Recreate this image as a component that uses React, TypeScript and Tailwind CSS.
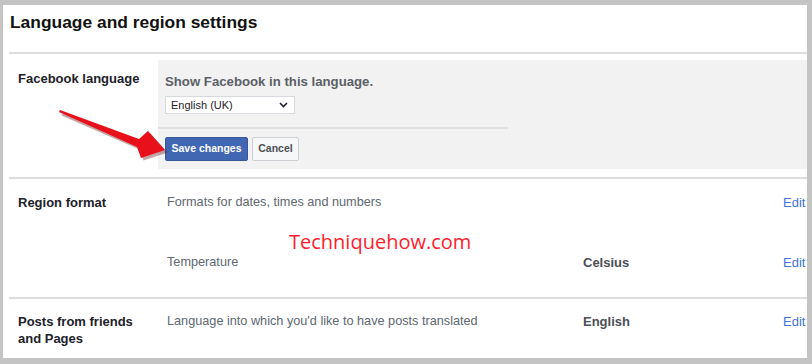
import React from "react";

const font = { fontFamily: '"Liberation Sans", Arial, sans-serif' };

function Arrow() {
  return (
    <svg
      className="absolute left-0 top-0 pointer-events-none"
      width="812"
      height="364"
      viewBox="0 0 812 364"
    >
      <polygon
        points="61,112 140,140 149,132 166,151 142,159 138,148 60,114"
        fill="#5a0000"
        opacity="0.35"
        transform="translate(1.5,1.5)"
      />
      <polygon
        points="60,110 139,139 148,131 165,150 141,158 137,147 59,112"
        fill="#e8111b"
      />
    </svg>
  );
}

function EditLink() {
  return <span className="text-[13px] leading-[17px] text-[#4473d6] whitespace-nowrap">Edit</span>;
}

function InfoLine({ text, value }: { text: string; value?: string }) {
  return (
    <div className="flex items-start leading-[17px]">
      <div className="w-[416px] shrink-0 text-[12.7px] text-[#606770]">{text}</div>
      <div className="w-[200px] shrink-0 text-[13px] font-bold text-[#4b4f56]">{value}</div>
      <EditLink />
    </div>
  );
}

export default function App() {
  return (
    <div className="relative w-[812px] h-[364px] bg-[#c4c4c4] pt-[5px] pl-[3px] pr-[5px] pb-[6px]" style={font}>
      <div className="h-full w-full bg-white overflow-hidden text-[#1d2129]">
        <h1 className="pl-[7px] pt-[6px] text-[17.4px] leading-[22px] font-bold text-[#111]">
          Language and region settings
        </h1>
        <div className="ml-[6px] mt-[19px] h-[2px] bg-[#dddddd]" />

        {/* Facebook language */}
        <div className="flex pt-[6px] pb-[8px]">
          <div className="w-[155px] shrink-0 pl-[15px] pt-[10px] text-[13px] leading-[18px] font-bold">
            Facebook language
          </div>
          <div className="flex-1 bg-[#f2f2f2] pt-[13px] pb-[8px]">
            <div className="pl-[7px] text-[13.2px] leading-[18px] font-bold text-[#5b5f66]">
              Show Facebook in this language.
            </div>
            <div className="ml-[7px] mt-[5px] flex h-[18px] w-[130px] items-center justify-between border border-[#d6d9dd] bg-white pl-[5px] pr-[6px]">
              <span className="text-[11px] leading-[16px] text-[#1d2129]">English (UK)</span>
              <svg width="9" height="6" viewBox="0 0 9 6">
                <path d="M1 1 L4.5 4.5 L8 1" fill="none" stroke="#1d2129" strokeWidth="1.6" />
              </svg>
            </div>
            <div className="mt-[13px] h-[2px] w-[350px] bg-[#e0e0e0]" />
            <div className="mt-[8px] flex gap-[4px] pl-[7px]">
              <button className="h-[24px] w-[83px] rounded-[2px] border border-[#365899] bg-[#4267b2] text-[10.5px] font-bold text-white">
                Save changes
              </button>
              <button className="h-[24px] w-[47px] rounded-[2px] border border-[#ccd0d5] bg-[#f6f7f9] text-[10.5px] font-bold text-[#4b4f56]">
                Cancel
              </button>
            </div>
          </div>
        </div>
        <div className="ml-[6px] h-[2px] bg-[#dddddd]" />

        {/* Region format */}
        <div className="flex pt-[15px] pb-[26px]">
          <div className="w-[164px] shrink-0 pl-[15px] text-[13px] leading-[17px] font-bold">Region format</div>
          <div className="flex flex-col gap-[43px]">
            <InfoLine text="Formats for dates, times and numbers" />
            <InfoLine text="Temperature" value="Celsius" />
          </div>
        </div>
        <div className="ml-[6px] h-[2px] bg-[#dddddd]" />

        {/* Posts */}
        <div className="flex pt-[14px] pb-[11px]">
          <div className="w-[164px] shrink-0 pl-[15px] pr-[20px] text-[13px] leading-[17px] font-bold">
            Posts from friends and Pages
          </div>
          <div>
            <InfoLine text="Language into which you'd like to have posts translated" value="English" />
          </div>
        </div>
      </div>

      <div
        className="absolute left-[289px] top-[230px] text-[20px] leading-[24px] text-[#ff1d2d] whitespace-nowrap"
        style={{ fontFamily: '"Open Sans", sans-serif' }}
      >
        Techniquehow.com
      </div>
      <Arrow />
    </div>
  );
}
